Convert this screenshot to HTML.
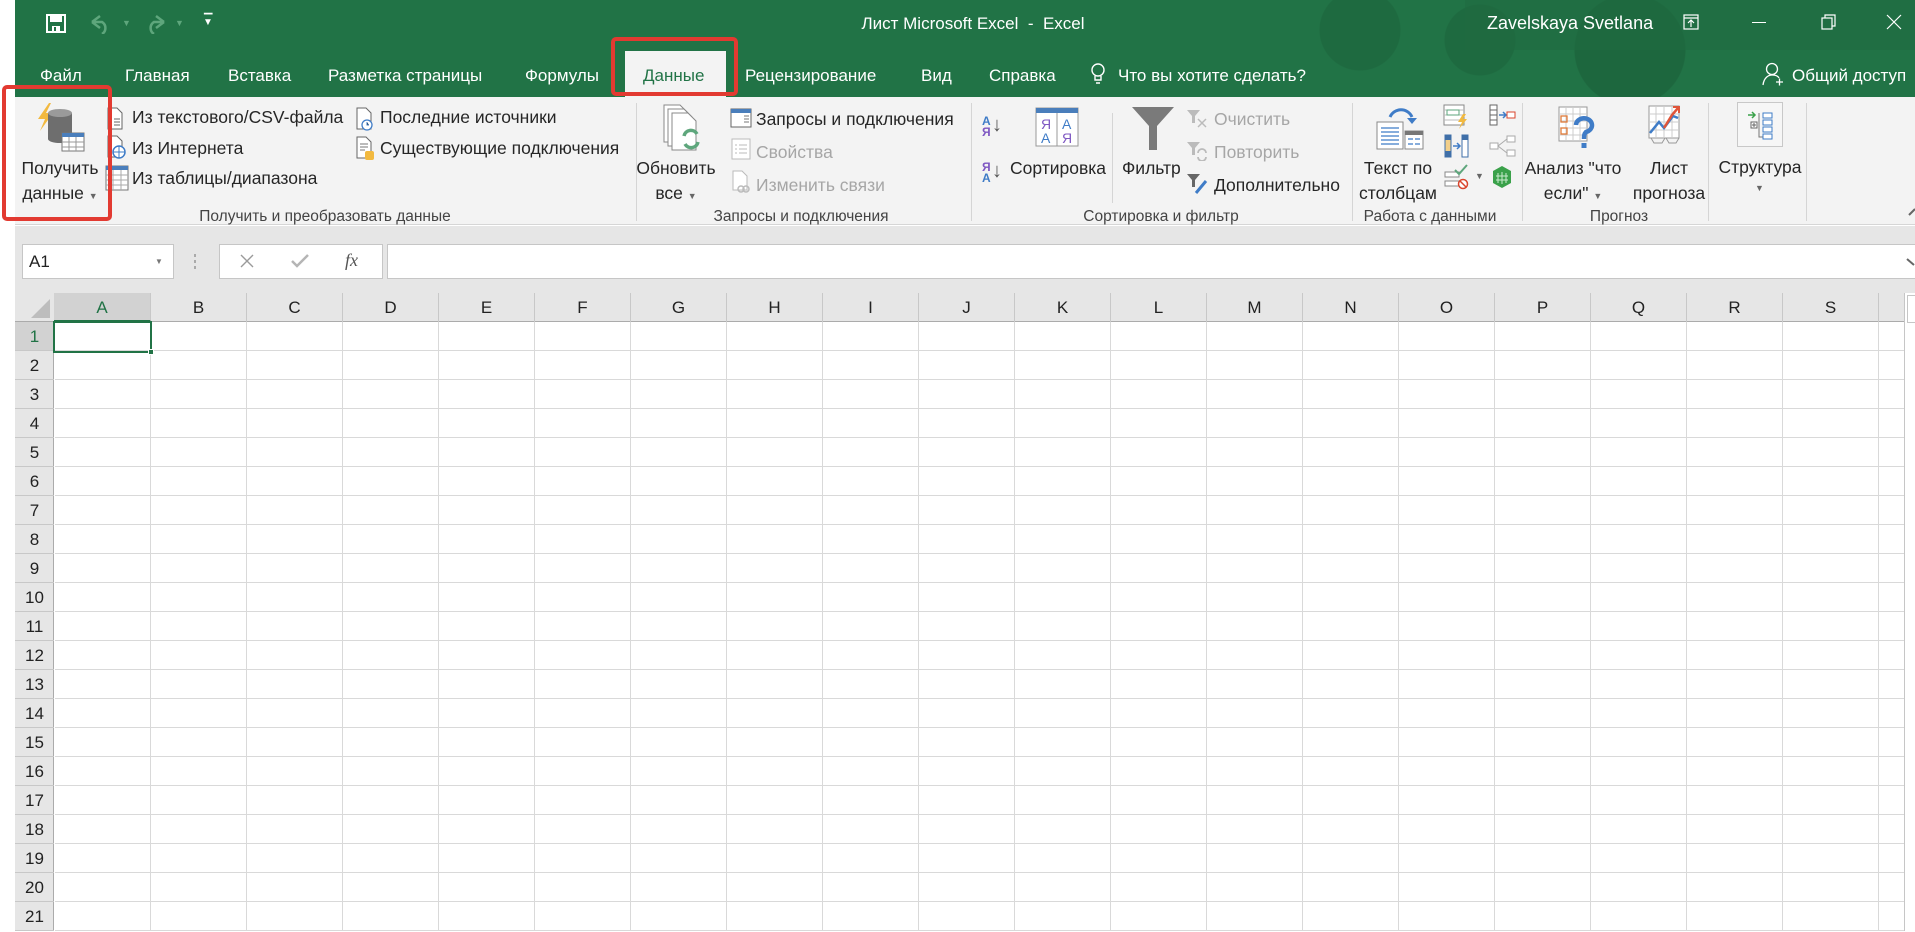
<!DOCTYPE html>
<html><head><meta charset="utf-8"><style>
*{margin:0;padding:0;box-sizing:border-box}
body{width:1915px;height:931px;overflow:hidden;position:relative;background:#fff;font-family:"Liberation Sans","DejaVu Sans",sans-serif;color:#262626}
.a{position:absolute;white-space:nowrap}
.tab{position:absolute;top:66px;font-size:17px;color:#fff}
.rt{position:absolute;font-size:17.5px;color:#262626;white-space:nowrap}
.gl{position:absolute;top:208px;font-size:15.5px;color:#444;white-space:nowrap;transform:translateX(-50%)}
.sep{position:absolute;top:103px;width:1px;height:118px;background:#d5d5d5}
.dis{color:#a6a6a6}
.ch{position:absolute;top:293px;height:29px;font-size:17px;text-align:center;line-height:30px;border-right:1px solid #c8c8c8;color:#222}
.rh{position:absolute;left:15px;width:39px;height:29px;font-size:17px;text-align:center;line-height:30px;border-bottom:1px solid #c8c8c8;color:#222}
.c{transform:translateX(-50%);text-align:center}
</style></head><body>
<div class="a" style="left:15px;top:0;width:1900px;height:97px;background:#217346"></div>
<div class="a" style="left:1300px;top:0;width:500px;height:97px;background:radial-gradient(circle at 60px 30px,#1e6a40 40px,transparent 41px),radial-gradient(circle at 180px 40px,#1e6a40 35px,transparent 36px),radial-gradient(circle at 330px 50px,#1d673e 55px,transparent 56px)"></div>
<div class="a" style="left:1465px;top:0;width:450px;height:50px;background:#1f6b41;opacity:.6"></div>
<div class="a" style="left:0;top:0;width:15px;height:931px;background:#fff"></div>
<svg class="a" style="left:46px;top:14px" width="20" height="19" viewBox="0 0 20 19"><rect x="1" y="1" width="18" height="17" fill="none" stroke="#fff" stroke-width="2"/><rect x="4" y="1" width="12" height="7" fill="#fff"/><rect x="6" y="12" width="8" height="6" fill="#fff"/><rect x="8" y="13" width="2" height="4" fill="#217346"/></svg>
<svg class="a" style="left:88px;top:14px" width="30" height="20"><path d="M4 8 L12 2 M4 8 L12 14 M4 8 H14 A7 7 0 0 1 14 20" fill="none" stroke="#5ea67c" stroke-width="2.5"/></svg>
<div class="a" style="left:122px;top:18px;font-size:9px;color:#5ea67c">▼</div>
<svg class="a" style="left:142px;top:14px" width="26" height="20"><path d="M22 8 L14 2 M22 8 L14 14 M22 8 H12 A7 7 0 0 0 12 20" fill="none" stroke="#5ea67c" stroke-width="2.5"/></svg>
<div class="a" style="left:175px;top:18px;font-size:9px;color:#5ea67c">▼</div>
<div class="a" style="left:204px;top:13px;font-size:11px;color:#fff">▔</div>
<div class="a" style="left:203px;top:17px;font-size:10px;color:#fff">▼</div>
<div class="a" style="left:973px;top:14px;font-size:17px;color:#fff;transform:translateX(-50%)">Лист Microsoft Excel&nbsp; - &nbsp;Excel</div>
<div class="a" style="left:1487px;top:13px;font-size:18px;color:#fff">Zavelskaya Svetlana</div>
<svg class="a" style="left:1683px;top:14px" width="16" height="16"><rect x="1" y="1" width="14" height="14" fill="none" stroke="#fff" stroke-width="1.2"/><path d="M1 4H15M8 13V6M5 9L8 6L11 9" fill="none" stroke="#fff" stroke-width="1.2"/></svg>
<div class="a" style="left:1752px;top:22px;width:14px;height:1px;background:#fff"></div>
<svg class="a" style="left:1821px;top:14px" width="16" height="16"><rect x="1" y="4" width="10" height="11" fill="none" stroke="#fff" stroke-width="1.2"/><path d="M4 4V1H14V12H11" fill="none" stroke="#fff" stroke-width="1.2"/></svg>
<svg class="a" style="left:1886px;top:14px" width="16" height="16"><path d="M1 1L15 15M15 1L1 15" stroke="#fff" stroke-width="1.2"/></svg>
<div class="tab" style="left:40px">Файл</div>
<div class="tab" style="left:125px">Главная</div>
<div class="tab" style="left:228px">Вставка</div>
<div class="tab" style="left:328px">Разметка страницы</div>
<div class="tab" style="left:525px">Формулы</div>
<div class="a" style="left:625px;top:51px;width:101px;height:47px;background:#f3f3f3"></div>
<div class="tab" style="left:643px;color:#217346">Данные</div>
<div class="tab" style="left:745px">Рецензирование</div>
<div class="tab" style="left:921px">Вид</div>
<div class="tab" style="left:989px">Справка</div>
<svg class="a" style="left:1090px;top:63px" width="16" height="22"><circle cx="8" cy="7" r="6" fill="none" stroke="#fff" stroke-width="1.4"/><path d="M5 13V17H11V13M6 20H10" stroke="#fff" stroke-width="1.4" fill="none"/></svg>
<div class="tab" style="left:1118px">Что вы хотите сделать?</div>
<svg class="a" style="left:1762px;top:62px" width="22" height="24"><circle cx="10" cy="7" r="5.5" fill="none" stroke="#fff" stroke-width="1.3"/><path d="M1 23C2 15 7 13 10 13C13 13 16 14 17 16M14 20H21M17.5 16.5V23.5" stroke="#fff" stroke-width="1.3" fill="none"/></svg>
<div class="tab" style="left:1792px">Общий доступ</div>

<div class="a" style="left:15px;top:97px;width:1900px;height:128px;background:#f3f3f3;border-bottom:1px solid #d6d6d6"></div>
<svg class="a" style="left:34px;top:101px" width="52" height="52"><path d="M15 2L4 18H11L6 30L19 12H12L17 2Z" fill="#f2b93f"/><rect x="14" y="12" width="24" height="26" fill="#6e6e6e"/><ellipse cx="26" cy="38" rx="12" ry="4" fill="#6e6e6e"/><ellipse cx="26" cy="12" rx="12" ry="4" fill="#9a9a9a"/><rect x="28" y="32" width="22" height="18" fill="#fff" stroke="#777"/><rect x="28" y="32" width="22" height="4" fill="#4a7ebb"/><path d="M35 36V50M42 36V50M28 41H50M28 46H50" stroke="#999"/></svg>
<div class="rt c" style="left:60px;top:158px">Получить</div>
<div class="rt c" style="left:60px;top:183px">данные <span style="font-size:9px;color:#666">▼</span></div>
<svg class="a" style="left:106px;top:107px" width="18" height="24"><path d="M2 1H11L16 6V22H2Z" fill="#fff" stroke="#666"/><path d="M8 12H14M8 15H14M8 18H14" stroke="#666"/></svg>
<div class="rt" style="left:132px;top:107px">Из текстового/CSV-файла</div>
<svg class="a" style="left:106px;top:135px" width="22" height="24"><path d="M2 1H11L16 6V22H2Z" fill="#fff" stroke="#666"/><circle cx="13" cy="17" r="6" fill="#fff" stroke="#3f7cc7" stroke-width="1.5"/><path d="M7 17H19M13 11V23" stroke="#3f7cc7"/></svg>
<div class="rt" style="left:132px;top:138px">Из Интернета</div>
<svg class="a" style="left:105px;top:165px" width="24" height="26"><rect x="1" y="1" width="22" height="24" fill="#fff" stroke="#777"/><rect x="1" y="1" width="22" height="4" fill="#4a7ebb"/><path d="M8 5V25M16 5V25M1 10H23M1 15H23M1 20H23" stroke="#aaa"/></svg>
<div class="rt" style="left:132px;top:168px">Из таблицы/диапазона</div>
<svg class="a" style="left:355px;top:107px" width="20" height="26"><path d="M2 1H11L16 6V22H2Z" fill="#fff" stroke="#666"/><circle cx="12" cy="18" r="5" fill="#fff" stroke="#3f7cc7" stroke-width="1.3"/><path d="M12 15V18H14" stroke="#3f7cc7"/></svg>
<div class="rt" style="left:380px;top:107px">Последние источники</div>
<svg class="a" style="left:355px;top:136px" width="20" height="26"><path d="M2 1H11L16 6V22H2Z" fill="#fff" stroke="#666"/><path d="M5 8H13M5 11H13M5 14H10" stroke="#777"/><rect x="10" y="15" width="9" height="9" rx="2" fill="#f2b93f"/></svg>
<div class="rt" style="left:380px;top:138px">Существующие подключения</div>
<div class="gl" style="left:325px">Получить и преобразовать данные</div>
<div class="sep" style="left:636px"></div>
<svg class="a" style="left:662px;top:104px" width="40" height="52"><path d="M2 1H18L26 9V38H2Z" fill="#fff" stroke="#888"/><path d="M6 5H22L30 13V42H6Z" fill="#fff" stroke="#888"/><path d="M10 9H26L34 17V46H10Z" fill="#fff" stroke="#888"/><path d="M22 32A7 7 0 0 1 35 30M36 38A7 7 0 0 1 23 40" stroke="#5ea67c" stroke-width="3.5" fill="none"/></svg>
<div class="rt c" style="left:676px;top:158px">Обновить</div>
<div class="rt c" style="left:676px;top:183px">все <span style="font-size:9px;color:#666">▼</span></div>
<svg class="a" style="left:730px;top:108px" width="22" height="20"><rect x="1" y="1" width="20" height="18" fill="#fff" stroke="#666"/><rect x="1" y="1" width="20" height="4" fill="#4a7ebb"/><path d="M14 8H19M14 11H19M14 14H19" stroke="#777"/></svg>
<div class="rt" style="left:756px;top:109px">Запросы и подключения</div>
<svg class="a" style="left:731px;top:138px" width="20" height="22"><rect x="1" y="1" width="18" height="20" fill="#fff" stroke="#bbb"/><path d="M4 7H6M8 7H16M4 11H6M8 11H16M4 15H6M8 15H16" stroke="#bbb"/></svg>
<div class="rt dis" style="left:756px;top:142px">Свойства</div>
<svg class="a" style="left:731px;top:170px" width="20" height="24"><path d="M2 1H11L16 6V20H2Z" fill="#fff" stroke="#bbb"/><circle cx="10" cy="19" r="3" fill="none" stroke="#bbb" stroke-width="1.5"/><circle cx="15" cy="19" r="3" fill="none" stroke="#bbb" stroke-width="1.5"/></svg>
<div class="rt dis" style="left:756px;top:175px">Изменить связи</div>
<div class="gl" style="left:801px">Запросы и подключения</div>
<div class="sep" style="left:971px"></div>
<div class="a" style="left:982px;top:116px;font-size:12px;font-weight:bold;line-height:11px;color:#3f7cc7">А<br><span style="color:#7e57c2">Я</span></div>
<div class="a" style="left:992px;top:114px;font-size:20px;color:#555">↓</div>
<div class="a" style="left:982px;top:162px;font-size:12px;font-weight:bold;line-height:11px;color:#7e57c2">Я<br><span style="color:#3f7cc7">А</span></div>
<div class="a" style="left:992px;top:160px;font-size:20px;color:#555">↓</div>
<svg class="a" style="left:1035px;top:107px" width="44" height="40"><rect x="1" y="1" width="42" height="38" fill="#fff" stroke="#999"/><rect x="1" y="1" width="42" height="5" fill="#4a7ebb"/><path d="M22 6V39" stroke="#999"/><text x="6" y="22" font-size="14" fill="#7e57c2" font-family="Liberation Sans">Я</text><text x="6" y="36" font-size="14" fill="#3f7cc7" font-family="Liberation Sans">А</text><text x="27" y="22" font-size="14" fill="#3f7cc7" font-family="Liberation Sans">А</text><text x="27" y="36" font-size="14" fill="#7e57c2" font-family="Liberation Sans">Я</text></svg>
<div class="rt" style="left:1010px;top:158px">Сортировка</div>
<div class="a" style="left:1112px;top:113px;width:1px;height:90px;background:#d5d5d5"></div>
<svg class="a" style="left:1131px;top:106px" width="44" height="45"><path d="M1 1H43L26 20V44H18V20Z" fill="#7a7a7a"/></svg>
<div class="rt" style="left:1122px;top:158px">Фильтр</div>
<svg class="a" style="left:1186px;top:109px" width="24" height="20"><path d="M1 1H14L9 7V14H6V7Z" fill="#bbb"/><path d="M12 10L20 18M20 10L12 18" stroke="#bbb" stroke-width="1.5"/></svg>
<div class="rt dis" style="left:1214px;top:109px">Очистить</div>
<svg class="a" style="left:1186px;top:141px" width="24" height="20"><path d="M1 1H14L9 7V14H6V7Z" fill="#bbb"/><path d="M12 12A4 4 0 0 1 20 12M20 16A4 4 0 0 1 12 16" stroke="#bbb" stroke-width="1.8" fill="none"/></svg>
<div class="rt dis" style="left:1214px;top:142px">Повторить</div>
<svg class="a" style="left:1186px;top:173px" width="24" height="22"><path d="M1 1H14L9 7V14H6V7Z" fill="#666"/><path d="M10 20L20 8" stroke="#3f7cc7" stroke-width="3"/></svg>
<div class="rt" style="left:1214px;top:175px">Дополнительно</div>
<div class="gl" style="left:1161px">Сортировка и фильтр</div>
<div class="sep" style="left:1352px"></div>
<svg class="a" style="left:1375px;top:105px" width="50" height="46"><path d="M15 12A12 12 0 0 1 37 12" stroke="#3f7cc7" stroke-width="3" fill="none"/><path d="M32 13L37 19L42 13" fill="#3f7cc7"/><rect x="2" y="17" width="26" height="27" fill="#fff" stroke="#888"/><path d="M6 23H24M6 27H24M6 31H24M6 35H24M6 39H24" stroke="#3f7cc7" stroke-width="1.3"/><rect x="30" y="26" width="18" height="18" fill="#fff" stroke="#888"/><rect x="30" y="26" width="18" height="4" fill="#777"/><path d="M33 34H38M40 34H45M33 39H38M40 39H45" stroke="#3f7cc7" stroke-width="1.3"/></svg>
<div class="rt c" style="left:1398px;top:158px">Текст по</div>
<div class="rt c" style="left:1398px;top:183px">столбцам</div>
<svg class="a" style="left:1443px;top:104px" width="28" height="26"><rect x="1" y="1" width="20" height="20" fill="#fff" stroke="#888"/><path d="M1 6H21M1 11H21M1 16H21" stroke="#bbb"/><rect x="4" y="6" width="12" height="5" fill="#fff" stroke="#5ea67c"/><path d="M20 10L15 18H19L16 25L24 15H20L23 10Z" fill="#f2b93f"/></svg>
<svg class="a" style="left:1444px;top:134px" width="26" height="24"><rect x="1" y="1" width="6" height="22" fill="#f2cf8a" stroke="#3f6fa8"/><rect x="1" y="1" width="6" height="5" fill="#3f6fa8"/><rect x="1" y="17" width="6" height="6" fill="#3f6fa8"/><rect x="18" y="1" width="6" height="22" fill="#fff" stroke="#3f6fa8"/><rect x="18" y="1" width="6" height="5" fill="#3f6fa8"/><path d="M9 12H15M13 9L16 12L13 15" stroke="#3f7cc7" stroke-width="1.5" fill="none"/></svg>
<svg class="a" style="left:1444px;top:164px" width="26" height="26"><rect x="1" y="8" width="14" height="5" fill="#fff" stroke="#888"/><rect x="1" y="17" width="14" height="5" fill="#fff" stroke="#888"/><path d="M11 6L15 10L23 1" stroke="#5ea67c" stroke-width="2" fill="none"/><circle cx="19" cy="20" r="4.5" fill="#fff" stroke="#d9452d" stroke-width="1.5"/><path d="M16 17L22 23" stroke="#d9452d" stroke-width="1.5"/></svg>
<div class="a" style="left:1475px;top:171px;font-size:9px;color:#666">▼</div>
<svg class="a" style="left:1489px;top:104px" width="28" height="22"><rect x="1" y="1" width="7" height="20" fill="#fff" stroke="#666"/><path d="M1 6H8M1 11H8M1 16H8" stroke="#666"/><path d="M10 11H16M14 8L17 11L14 14" stroke="#3f7cc7" stroke-width="1.5" fill="none"/><rect x="18" y="8" width="8" height="6" fill="#fff" stroke="#d9452d"/></svg>
<svg class="a" style="left:1489px;top:134px" width="28" height="24"><rect x="1" y="9" width="8" height="6" fill="#fff" stroke="#aaa"/><rect x="18" y="2" width="8" height="6" fill="#fff" stroke="#aaa"/><rect x="18" y="16" width="8" height="6" fill="#fff" stroke="#aaa"/><path d="M9 12L18 5M9 12L18 19" stroke="#aaa"/></svg>
<svg class="a" style="left:1490px;top:165px" width="24" height="24"><path d="M3 6L12 1L21 6V18L12 23L3 18Z" fill="#3aa14a"/><path d="M8 8V18M12 7V19M16 8V18M6 11H18M6 15H18" stroke="#c9eacd" stroke-width="1"/></svg>
<div class="gl" style="left:1430px">Работа с данными</div>
<div class="sep" style="left:1522px"></div>
<svg class="a" style="left:1558px;top:106px" width="38" height="46"><rect x="1" y="1" width="28" height="34" fill="#fff" stroke="#999"/><path d="M8 1V35M15 1V35M22 1V35M1 8H29M1 15H29M1 22H29M1 29H29" stroke="#ccc"/><rect x="3" y="10" width="6" height="6" fill="none" stroke="#e07b39" stroke-width="1.3"/><rect x="3" y="22" width="6" height="6" fill="none" stroke="#e07b39" stroke-width="1.3"/><path d="M18 19A8 7 0 1 1 28 26C26 28 26 30 26 33" stroke="#3f7cc7" stroke-width="4.5" fill="none"/><rect x="23.5" y="37" width="5" height="5" fill="#3f7cc7"/></svg>
<div class="rt c" style="left:1573px;top:158px">Анализ "что</div>
<div class="rt c" style="left:1573px;top:183px">если" <span style="font-size:9px;color:#666">▼</span></div>
<svg class="a" style="left:1648px;top:105px" width="42" height="44"><rect x="1" y="1" width="30" height="32" fill="#fff" stroke="#999"/><path d="M8 1V33M16 1V33M24 1V33M1 9H31M1 17H31M1 25H31" stroke="#ccc"/><path d="M2 28L11 17L16 23L25 11L30 13" stroke="#3f7cc7" stroke-width="2.5" fill="none"/><path d="M16 23L24 10L30 3" stroke="#e0553a" stroke-width="2.5" fill="none"/><path d="M25 2H31V8" stroke="#e0553a" stroke-width="2" fill="none"/><path d="M3 33L6 38H14L17 33M18 33L21 38H28L31 33" stroke="#999" fill="none"/></svg>
<div class="rt c" style="left:1669px;top:158px">Лист</div>
<div class="rt c" style="left:1669px;top:183px">прогноза</div>
<div class="gl" style="left:1619px">Прогноз</div>
<div class="sep" style="left:1708px"></div>
<div class="a" style="left:1737px;top:102px;width:46px;height:45px;border:1px solid #c8c8c8;background:#f6f6f6"></div>
<svg class="a" style="left:1747px;top:110px" width="26" height="30"><path d="M1 5H8M5 2L8 5L5 8" stroke="#3aa14a" stroke-width="1.5" fill="none"/><rect x="4" y="12" width="6" height="6" fill="#fff" stroke="#666"/><path d="M7 13V17M5 15H9" stroke="#666"/><path d="M12 3V27H16" stroke="#777" fill="none"/><rect x="16" y="3" width="9" height="5" fill="#fff" stroke="#3f7cc7"/><rect x="16" y="10" width="9" height="5" fill="#fff" stroke="#3f7cc7"/><rect x="16" y="17" width="9" height="5" fill="#fff" stroke="#3f7cc7"/><rect x="16" y="24" width="9" height="5" fill="#fff" stroke="#3f7cc7"/></svg>
<div class="rt c" style="left:1760px;top:157px">Структура</div>
<div class="a" style="left:1755px;top:183px;font-size:9px;color:#666">▼</div>
<div class="sep" style="left:1806px"></div>
<svg class="a" style="left:1908px;top:208px" width="8" height="8"><path d="M1 7L7 1" stroke="#666" stroke-width="2"/></svg>

<div class="a" style="left:15px;top:226px;width:1900px;height:67px;background:#e6e6e6"></div>
<div class="a" style="left:22px;top:244px;width:152px;height:35px;background:#fff;border:1px solid #c6c6c6"></div>
<div class="a" style="left:29px;top:252px;font-size:17px;color:#222">A1</div>
<div class="a" style="left:155px;top:257px;font-size:8px;color:#777">▼</div>
<div class="a" style="left:194px;top:254px;width:2px;height:3px;background:#aaa;box-shadow:0 6px 0 #aaa,0 12px 0 #aaa"></div>
<div class="a" style="left:219px;top:244px;width:164px;height:35px;background:#fff;border:1px solid #c6c6c6"></div>
<svg class="a" style="left:239px;top:253px" width="16" height="16"><path d="M2 2L14 14M14 2L2 14" stroke="#9a9a9a" stroke-width="1.4"/></svg>
<svg class="a" style="left:290px;top:253px" width="20" height="16"><path d="M2 8L7 13L18 2" stroke="#b5b5b5" stroke-width="2.5" fill="none"/></svg>
<div class="a" style="left:345px;top:250px;font-size:18px;font-style:italic;font-family:'Liberation Serif',serif;color:#555">fx</div>
<div class="a" style="left:387px;top:244px;width:1530px;height:35px;background:#fff;border:1px solid #c6c6c6"></div>
<svg class="a" style="left:1906px;top:258px" width="9" height="8"><path d="M1 1L8 7" stroke="#666" stroke-width="2"/></svg>

<div class="a" style="left:15px;top:293px;width:1890px;height:29px;background:#e6e6e6;border-bottom:1px solid #ababab"></div>
<div class="a" style="left:15px;top:322px;width:39px;height:609px;background:#e6e6e6;border-right:1px solid #ababab"></div>
<svg class="a" style="left:28px;top:296px" width="24" height="24"><path d="M22 3V22H3Z" fill="#bdbdbd"/></svg>
<div class="a" style="left:55px;top:322px;width:1849px;height:609px;background-image:repeating-linear-gradient(to right,transparent 0,transparent 95px,#d9d9d9 95px,#d9d9d9 96px),repeating-linear-gradient(to bottom,transparent 0,transparent 28px,#d9d9d9 28px,#d9d9d9 29px)"></div>
<div class="ch" style="left:54px;width:97px;background:#d2d2d2;color:#217346;border-bottom:2px solid #217346">A</div>
<div class="ch" style="left:151px;width:96px">B</div><div class="ch" style="left:247px;width:96px">C</div><div class="ch" style="left:343px;width:96px">D</div><div class="ch" style="left:439px;width:96px">E</div><div class="ch" style="left:535px;width:96px">F</div><div class="ch" style="left:631px;width:96px">G</div><div class="ch" style="left:727px;width:96px">H</div><div class="ch" style="left:823px;width:96px">I</div><div class="ch" style="left:919px;width:96px">J</div><div class="ch" style="left:1015px;width:96px">K</div><div class="ch" style="left:1111px;width:96px">L</div><div class="ch" style="left:1207px;width:96px">M</div><div class="ch" style="left:1303px;width:96px">N</div><div class="ch" style="left:1399px;width:96px">O</div><div class="ch" style="left:1495px;width:96px">P</div><div class="ch" style="left:1591px;width:96px">Q</div><div class="ch" style="left:1687px;width:96px">R</div><div class="ch" style="left:1783px;width:96px">S</div>
<div class="rh" style="top:322px;background:#d2d2d2;color:#217346">1</div>
<div class="rh" style="top:351px">2</div><div class="rh" style="top:380px">3</div><div class="rh" style="top:409px">4</div><div class="rh" style="top:438px">5</div><div class="rh" style="top:467px">6</div><div class="rh" style="top:496px">7</div><div class="rh" style="top:525px">8</div><div class="rh" style="top:554px">9</div><div class="rh" style="top:583px">10</div><div class="rh" style="top:612px">11</div><div class="rh" style="top:641px">12</div><div class="rh" style="top:670px">13</div><div class="rh" style="top:699px">14</div><div class="rh" style="top:728px">15</div><div class="rh" style="top:757px">16</div><div class="rh" style="top:786px">17</div><div class="rh" style="top:815px">18</div><div class="rh" style="top:844px">19</div><div class="rh" style="top:873px">20</div><div class="rh" style="top:902px">21</div>
<div class="a" style="left:53px;top:321px;width:99px;height:32px;border:2px solid #217346"></div>
<div class="a" style="left:148px;top:349px;width:6px;height:6px;background:#217346;border:1px solid #fff"></div>
<div class="a" style="left:1904px;top:293px;width:11px;height:638px;background:#fff;border-left:1px solid #c6c6c6"></div>
<div class="a" style="left:1907px;top:295px;width:8px;height:28px;border:1px solid #c6c6c6;border-right:none"></div>

<div class="a" style="left:2px;top:85px;width:110px;height:136px;border:4px solid #e23a31;border-radius:5px"></div>
<div class="a" style="left:611px;top:37px;width:127px;height:59px;border:4px solid #e23a31;border-radius:5px"></div>
</body></html>
